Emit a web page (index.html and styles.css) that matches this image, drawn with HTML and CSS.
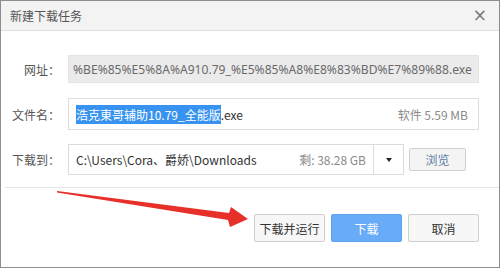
FILE: index.html
```html
<!DOCTYPE html>
<html lang="zh-CN">
<head>
  <meta charset="UTF-8" />
  <title>新建下载任务</title>
  <link rel="stylesheet" href="styles.css">
</head>
<body>

  <div class="dialog">
    <div class="title-bar">
      <span class="title">新建下载任务</span>
      <span class="close-btn">&times;</span>
    </div>

    <div class="form">
      <div class="row row-url">
        <label>网址：</label>
        <div class="box box-readonly">
          <span class="url">%BE%85%E5%8A%A910.79_%E5%85%A8%E8%83%BD%E7%89%88.exe</span>
        </div>
      </div>

      <div class="row row-name">
        <label>文件名：</label>
        <div class="box box-name">
          <span class="name"><span class="selected">浩克東哥辅助10.79_全能版</span>.exe</span>
          <span class="hint">软件 5.59 MB</span>
        </div>
      </div>

      <div class="row row-path">
        <label>下载到：</label>
        <div class="box box-path">
          <span class="path">C:\Users\Cora、爵娇\Downloads</span>
          <span class="hint">剩: 38.28 GB</span>
        </div>
        <div class="dropdown"><span class="caret"></span></div>
        <button class="btn btn-browse">浏览</button>
      </div>
    </div>

    <div class="divider"></div>

    <div class="actions">
      <button class="btn">下载并运行</button>
      <button class="btn btn-primary">下载</button>
      <button class="btn">取消</button>
    </div>

    <!-- annotation arrow drawn over the dialog -->
    <svg class="arrow" width="500" height="268" viewBox="0 0 500 268">
      <polygon points="57,191 229,213 231,207 248,219 230,227 228,220 57,192.5" fill="#e8302a"/>
    </svg>
  </div>

</body>
</html>
```

FILE: styles.css
```css
* { margin: 0; padding: 0; box-sizing: border-box; }
body {
  font-family: "Noto Sans CJK SC", "Noto Sans", sans-serif;
  font-size: 12px;
  color: #333;
  background: #fff;
  width: 500px;
  height: 268px;
  overflow: hidden;
}

.dialog {
  position: relative;
  width: 500px;
  height: 268px;
  border: 1px solid #8e8e8e;
  background: #fff;
}

/* --- Title bar --- */
.title-bar {
  height: 30px;
  background: #f3f3f3;
  border-bottom: 1px solid #dedede;
  display: flex;
  align-items: center;
  justify-content: space-between;
  padding: 0 12px 0 9px;
}

.title {
  font-size: 12px;
  color: #555;
}

.close-btn {
  font-family: "DejaVu Sans", sans-serif;
  font-size: 17px;
  color: #777;
  line-height: 1;
}

/* --- Form rows --- */
.form {
  padding: 24px 20px 0 0;
  display: flex;
  flex-direction: column;
}

.row {
  display: flex;
  align-items: center;
}

.row label {
  width: 59px;
  text-align: right;
  color: #555;
  margin-right: 8px;
}

.row-url { height: 28px; }
.row-name { height: 32px; margin-top: 15px; }
.row-path { height: 31px; margin-top: 14px; }

.box {
  flex: 1;
  height: 100%;
  display: flex;
  align-items: center;
  justify-content: space-between;
  padding: 0 10px 0 4px;
  border: 1px solid #dcdcdc;
  white-space: nowrap;
  overflow: hidden;
}

.box-readonly {
  background: #ebebeb;
  border-color: #e4e4e4;
  color: #6a6a6a;
}

.url {
  font-family: "Noto Sans", sans-serif;
  font-size: 12.1px;
}

.box-name .name {
  padding-left: 3px;
  color: #333;
}

.selected {
  background: #3892f0;
  color: #fff;
  padding: 1px 0;
}

.hint {
  color: #8a8a8a;
}

.box-path {
  flex: none;
  width: 306px;
  padding-left: 7px;
  padding-right: 7px;
}

.path { color: #333; }

.dropdown {
  width: 30px;
  height: 100%;
  border: 1px solid #dcdcdc;
  border-left: none;
  display: flex;
  align-items: center;
  justify-content: center;
}

.caret {
  width: 0;
  height: 0;
  border-left: 3px solid transparent;
  border-right: 3px solid transparent;
  border-top: 4px solid #222;
}

.btn {
  font-family: "Noto Sans CJK SC", sans-serif;
  font-size: 12px;
  height: 28px;
  width: 71px;
  background: #f7f7f7;
  border: 1px solid #cfcfcf;
  border-radius: 2px;
  color: #333;
}

.btn-browse {
  width: 57px;
  height: 23px;
  margin-left: 5px;
  color: #5d7ea6;
  background: #f4f4f4;
}

/* --- Bottom --- */
.divider {
  margin: 12px 0 0 4px;
  height: 1px;
  background: #e6e6e6;
}

.actions {
  display: flex;
  justify-content: flex-end;
  gap: 6px;
  padding: 26px 20px 0 0;
}

.btn-primary {
  background: #68abf6;
  border-color: #5fa2ee;
  color: #fff;
}

/* --- Overlay --- */
.arrow {
  position: absolute;
  left: -1px;
  top: -1px;
  pointer-events: none;
}
```
